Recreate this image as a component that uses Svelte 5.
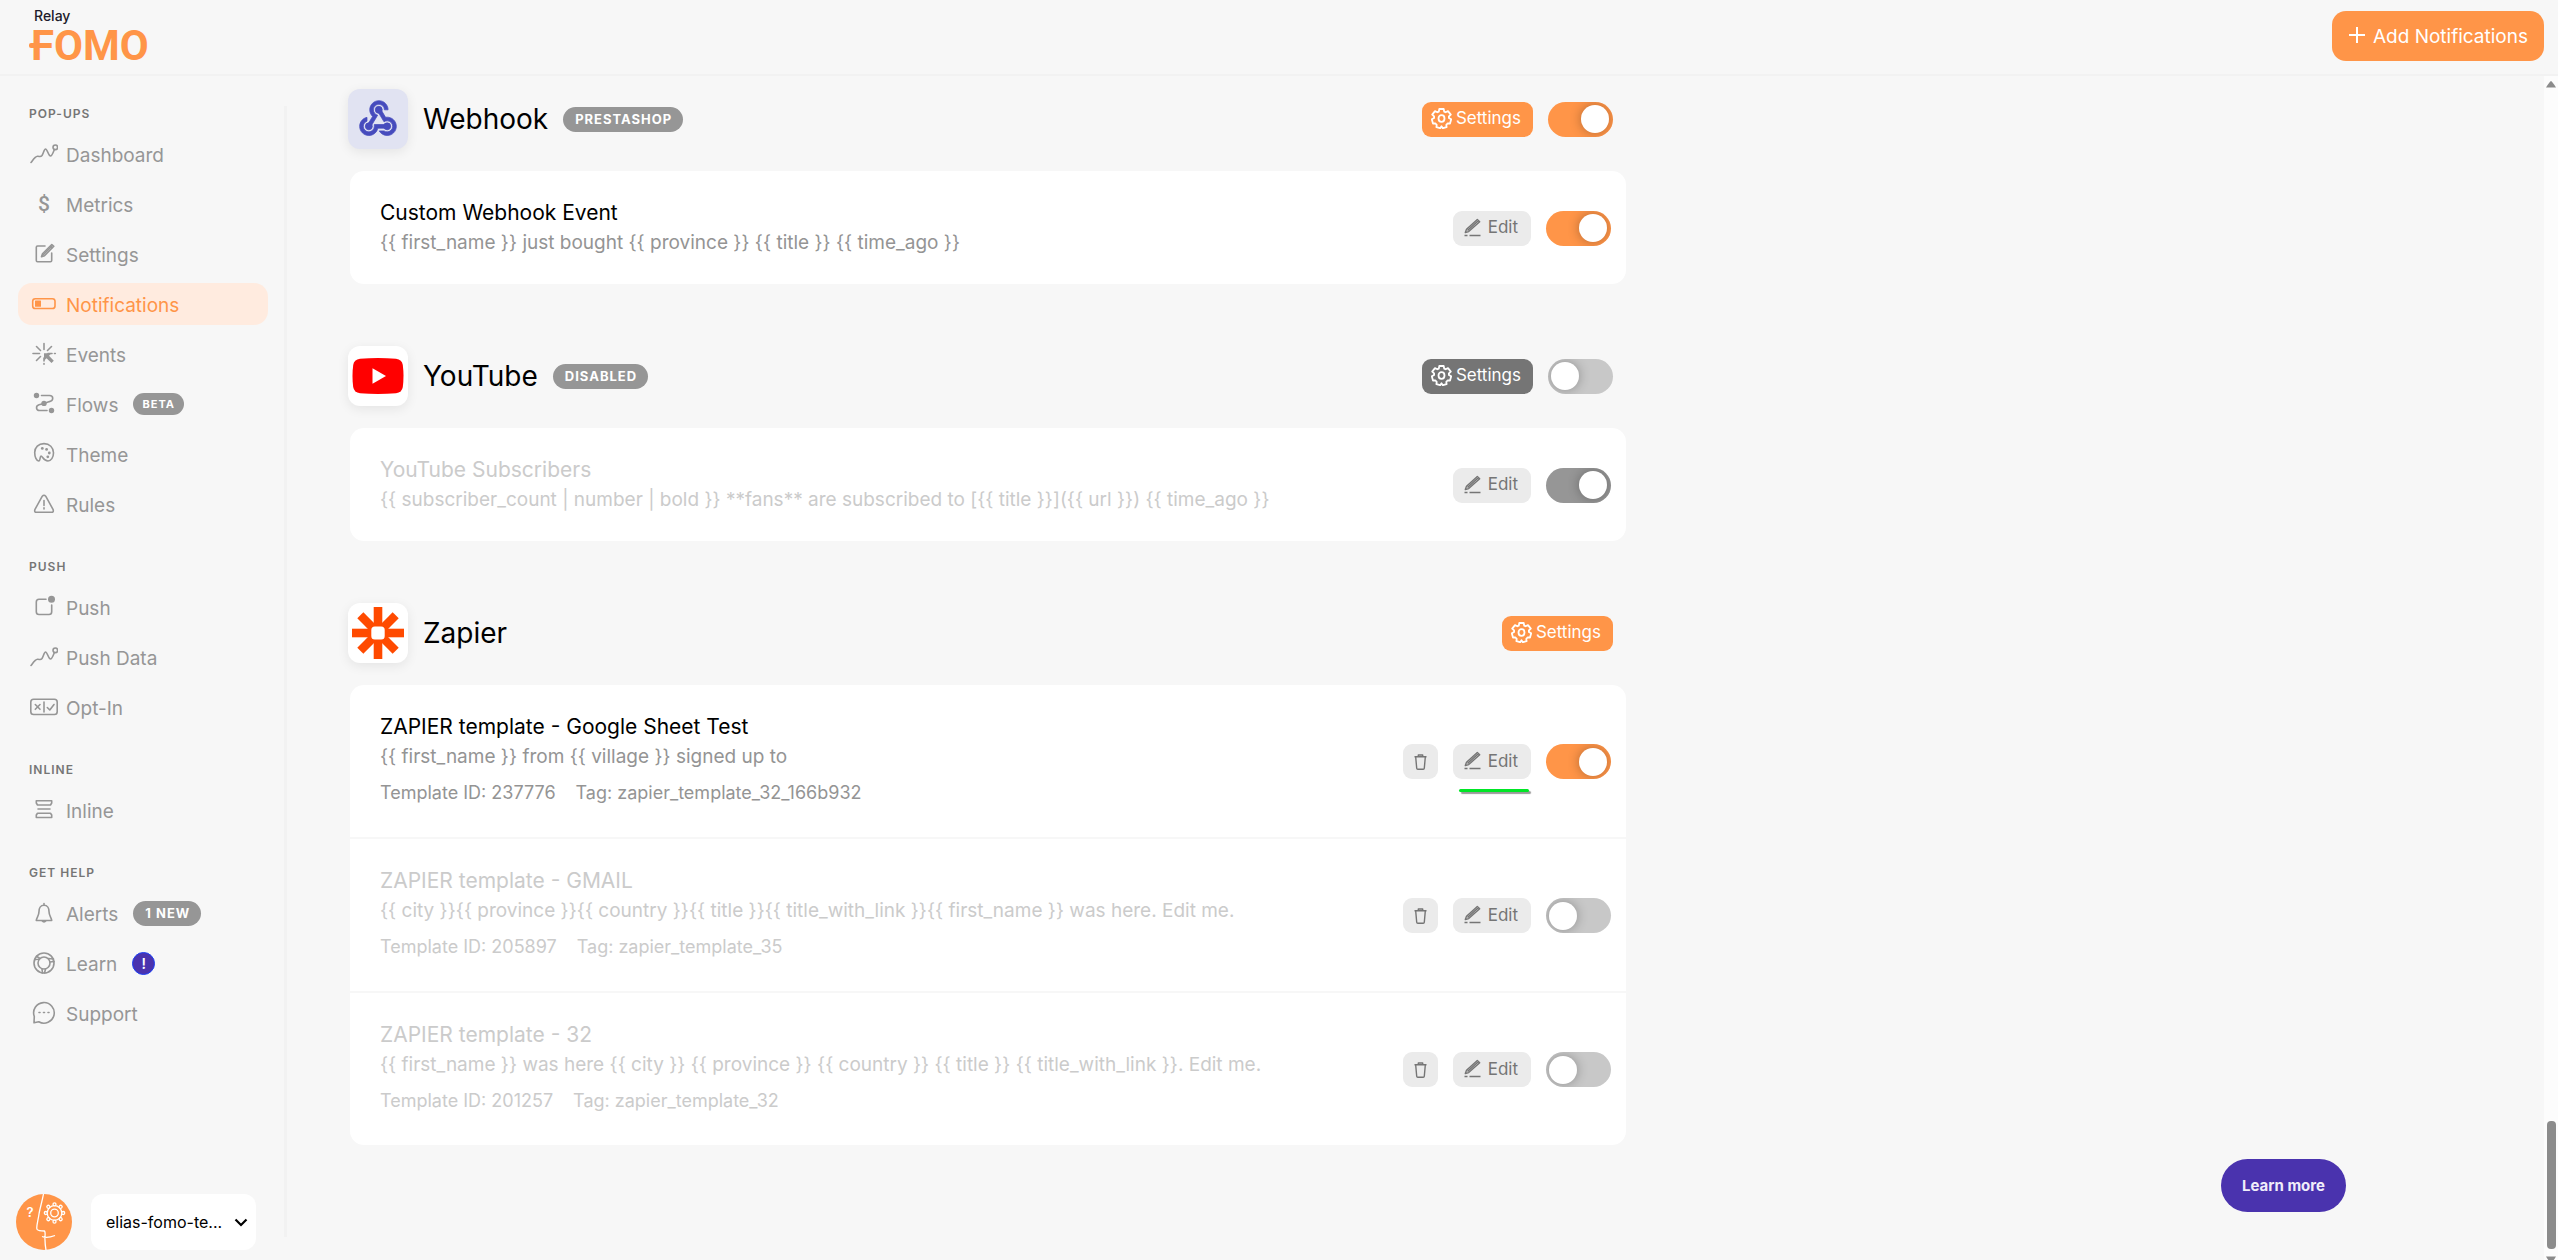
<script>
  const groups = [
    {
      title: 'POP-UPS',
      items: [
        { label: 'Dashboard', icon: 'chart' },
        { label: 'Metrics', icon: 'dollar' },
        { label: 'Settings', icon: 'compose' },
        { label: 'Notifications', icon: 'switch', active: true },
        { label: 'Events', icon: 'click' },
        { label: 'Flows', icon: 'flow', badge: 'BETA', kind: 'small' },
        { label: 'Theme', icon: 'palette' },
        { label: 'Rules', icon: 'warning' }
      ]
    },
    {
      title: 'PUSH',
      items: [
        { label: 'Push', icon: 'push' },
        { label: 'Push Data', icon: 'chart' },
        { label: 'Opt-In', icon: 'optin' }
      ]
    },
    { title: 'INLINE', items: [{ label: 'Inline', icon: 'inline' }] },
    {
      title: 'GET HELP',
      items: [
        { label: 'Alerts', icon: 'bell', badge: '1 NEW', kind: 'regular' },
        { label: 'Learn', icon: 'buoy', badge: '!', kind: 'dot' },
        { label: 'Support', icon: 'chat' }
      ]
    }
  ];

  let sections = $state([
    {
      name: 'Webhook', logo: 'webhook', tag: 'PRESTASHOP', toggle: true, on: true,
      rows: [
        { title: 'Custom Webhook Event', text: '{{ first_name }} just bought {{ province }} {{ title }} {{ time_ago }}', on: true }
      ]
    },
    {
      name: 'YouTube', logo: 'youtube', tag: 'DISABLED', toggle: true, on: false,
      rows: [
        { title: 'YouTube Subscribers', text: '{{ subscriber_count | number | bold }} **fans** are subscribed to [{{ title }}]({{ url }}) {{ time_ago }}', on: true, dim: true }
      ]
    },
    {
      name: 'Zapier', logo: 'zapier', toggle: false, on: true,
      rows: [
        { title: 'ZAPIER template - Google Sheet Test', text: '{{ first_name }} from {{ village }} signed up to', id: '237776', key: 'zapier_template_32_166b932', on: true, marked: true },
        { title: 'ZAPIER template - GMAIL', text: '{{ city }}{{ province }}{{ country }}{{ title }}{{ title_with_link }}{{ first_name }} was here. Edit me.', id: '205897', key: 'zapier_template_35', on: false, dim: true },
        { title: 'ZAPIER template - 32', text: '{{ first_name }} was here {{ city }} {{ province }} {{ country }} {{ title }} {{ title_with_link }}. Edit me.', id: '201257', key: 'zapier_template_32', on: false, dim: true }
      ]
    }
  ]);

  const teeth = [0, 45, 90, 135, 180, 225, 270, 315];
</script>

{#snippet navIcon(name)}
  <svg class="nav-icon" viewBox="0 0 28 28" aria-hidden="true">
    {#if name === 'chart'}
      <path d="M1 22.500C3 20 5 16.500 7.500 16.300C9.500 16.100 10.500 17.500 12 15.500C13.500 13 14.200 9 15.500 9C17.500 9 18.200 16 20.500 16C22 16 23 13 24.300 9.600" />
      <circle cx="25.300" cy="7.300" r="2.300" />
    {:else if name === 'dollar'}
      <text x="14" y="21" text-anchor="middle">$</text>
    {:else if name === 'compose'}
      <path d="M15 6H7.500Q6.300 6 6.300 7.200V20.500Q6.300 21.700 7.500 21.700H20.500Q21.700 21.700 21.700 20.500V13" />
      <path d="M11.500 16.800L12.500 13.800L21.800 4.500L23.800 6.300L14.500 15.700Z M20 6.500L22 8.200" />
      <path d="M12.500 15.500L22 6" />
    {:else if name === 'switch'}
      <rect x="2.700" y="8.700" width="22.300" height="9.800" rx="2.600" />
      <rect class="fill" x="5" y="10.500" width="6" height="6.200" rx="0.500" />
    {:else if name === 'click'}
      <path d="M14 3.500V9.500M6.500 6.500L10.500 10.500M21.500 6.500L17.500 10.500M3 13.500H9.500M6.500 20.500L10.500 16.500M18 13.500H22M24.500 13.500H25.300M14 18V21M14 23.500V24.300" />
      <path class="fill" d="M14 13.300H21.500L19 15.800L23.800 20.800L21.500 23L16.500 18.300L14 20.800Z" />
    {:else if name === 'flow'}
      <path d="M11.500 5.500H19.500C23.800 5.500 23.800 11 19.500 11.600L16 12.800M12 14L9 14.800C5.300 16 6 20.500 9.500 20.500H17" />
      <circle class="fill" cx="6.500" cy="5.500" r="2.700" />
      <circle class="fill" cx="14" cy="13.400" r="2.700" />
      <circle class="fill" cx="21.500" cy="20.500" r="2.700" />
    {:else if name === 'palette'}
      <path d="M14 3.600C8.500 3.600 4.700 7.500 4.700 12.500C4.700 17 6.500 21 8.700 21C10.500 21 9.800 16 11 16C12.500 16 13.500 21 18 21C21 21 23.500 17.500 23.500 12.800C23.500 7.500 19.500 3.600 14 3.600Z" />
      <circle class="fill" cx="12.300" cy="8.400" r="1.400" />
      <circle class="fill" cx="16.600" cy="9.400" r="1.400" />
      <circle class="fill" cx="19.300" cy="13" r="1.400" />
      <circle class="fill" cx="17.800" cy="16.800" r="1.400" />
    {:else if name === 'warning'}
      <path d="M12.300 6.200L5 19.300Q3.900 22.300 6.500 22.300H21.500Q24.100 22.300 23 19.300L15.700 6.200Q14 4.200 12.300 6.200Z" />
      <path d="M14 10.500V15.500M14 17.800V19" />
    {:else if name === 'push'}
      <path d="M16 6.300H9Q6.300 6.300 6.300 9V18.800Q6.300 21.500 9 21.500H19Q21.700 21.500 21.700 18.800V12" />
      <circle class="fill" cx="21.500" cy="6.300" r="3.500" />
    {:else if name === 'optin'}
      <rect x="0.800" y="6.300" width="26.400" height="15.200" rx="2.800" />
      <path d="M5.300 11.500L10 16.300M10 11.500L5.300 16.300M14 9V19M17.300 14.500L19.800 17L24 11.500" />
    {:else if name === 'inline'}
      <path d="M6.300 4.700H21.700V7L20.500 9H7.500L6.300 7ZM6.300 21.500H21.700V19L20.500 17.200H7.500L6.300 19ZM8 13H20" />
    {:else if name === 'bell'}
      <path d="M14 6.300C10.500 6.300 9 9.500 9 12.500C9 17 6.500 18.500 6.300 21.500H21.700C21.500 18.500 19 17 19 12.500C19 9.500 17.500 6.300 14 6.300ZM14 4.500V6" />
      <path class="fill" d="M11.300 22H16.700Q14 25.300 11.300 22Z" />
    {:else if name === 'buoy'}
      <circle cx="14" cy="14" r="10" />
      <circle cx="14" cy="14" r="6" />
      <path d="M4.800 10.500L9 10.300M6.500 7.300L10 9.500M18 9.500L23.500 10M20 13L24 12.500M12 20L12.500 24M15.500 20L14.500 24" />
    {:else}
      <path d="M4 23.800L4.300 17.500A10.300 10.300 0 1 1 8.800 22.800Z" />
      <path d="M9 13.500H10M13.500 13.500H14.500M18 13.500H19" />
    {/if}
  </svg>
{/snippet}

{#snippet gear()}
  <svg class="gear" viewBox="0 0 21 21" aria-hidden="true">
    <path d="M8.300 1H12.700L13.200 3.600L14.600 4.300L17 3.100L19.800 6.600L17.900 8.400V9.900L20.200 11.300L19 15.500H16.500L15.300 16.800L15.600 19.200L11.800 20.200L10.500 18.300L9.200 20.200L5.400 19.200L5.700 16.800L4.500 15.500H2L0.800 11.300L3.100 9.900V8.400L1.200 6.600L4 3.100L6.400 4.300L7.800 3.600Z" />
    <ellipse cx="10.500" cy="10.500" rx="3" ry="3.300" />
  </svg>
{/snippet}

<div class="page">
  <header class="topbar">
    <a class="brand" href="#home">
      <span class="brand-top">Relay</span>
      <span class="brand-mark">FOMO</span>
    </a>
    <button class="add" type="button">
      <svg viewBox="0 0 18 18" aria-hidden="true"><path d="M9 1V17M1 9H17" /></svg>
      <span>Add Notifications</span>
    </button>
  </header>

  <div class="body">
    <aside class="sidebar">
      <nav aria-label="Main">
        {#each groups as group}
          <section class="group">
            <h2>{group.title}</h2>
            <ul>
              {#each group.items as item}
                <li>
                  <a href="#{item.label}" class:active={item.active}>
                    {@render navIcon(item.icon)}
                    <span class="label">{item.label}</span>
                    {#if item.badge}<span class="badge {item.kind}">{item.badge}</span>{/if}
                  </a>
                </li>
              {/each}
            </ul>
          </section>
        {/each}
      </nav>
      <div class="account">
        <svg class="avatar" viewBox="0 0 56 56" aria-hidden="true">
          <circle class="disc" cx="28" cy="28" r="28" />
          <path d="M27.500 0C26 8 24 14 23 20C22 27 20.500 31 20.800 34.500C21 37.500 25 36.500 28.500 37C30 39 28.500 42 29 46C29 50 29.500 53 30 56M26 42.500C31 44.500 35 43 39 41.500" />
          <circle cx="38.500" cy="19" r="7.300" />
          <circle cx="38.500" cy="19" r="3.800" />
          {#each teeth as angle}
            <circle class="tooth" cx="38.500" cy="10.300" r="1.500" transform="rotate({angle} 38.5 19)" />
          {/each}
          <text x="14" y="23" text-anchor="middle">?</text>
        </svg>
        <div class="picker">
          <select aria-label="Account"><option>elias-fomo-te...</option></select>
          <svg viewBox="0 0 14 9" aria-hidden="true"><path d="M1.500 1.500L7 7L12.500 1.500" /></svg>
        </div>
      </div>
    </aside>
    <div class="rule"></div>

    <main>
      {#each sections as section}
        <section class="source">
          <header>
            <span class="tile {section.logo}">
              {#if section.logo === 'webhook'}
                <svg viewBox="0 0 24 24" aria-hidden="true">
                  <path d="M10 15h5.880c.27-.31.67-.5 1.120-.5.83 0 1.500.67 1.500 1.500s-.67 1.500-1.500 1.500c-.44 0-.84-.19-1.120-.5H11.900c-.46 2.280-2.480 4-4.900 4-2.760 0-5-2.240-5-5 0-2.420 1.720-4.440 4-4.900v2.070C4.840 13.580 4 14.700 4 16c0 1.650 1.350 3 3 3s3-1.350 3-3v-1zm2.500-11c1.650 0 3 1.350 3 3h2c0-2.760-2.240-5-5-5s-5 2.240-5 5c0 1.430.6 2.710 1.550 3.620l-2.350 3.900c-.68.14-1.200.75-1.200 1.480 0 .83.67 1.500 1.500 1.500s1.500-.67 1.500-1.500c0-.16-.02-.31-.07-.45l3.380-5.630C10.490 9.610 9.500 8.420 9.500 7c0-1.650 1.350-3 3-3zm4.500 9c-.64 0-1.230.2-1.720.54l-3.050-5.070C11.530 8.350 11 7.740 11 7c0-.83.67-1.500 1.500-1.500S14 6.170 14 7c0 .15-.02.29-.06.43l2.190 3.650c.28-.05.57-.08.87-.08 2.760 0 5 2.240 5 5s-2.240 5-5 5c-1.850 0-3.470-1.010-4.330-2.500h2.670c.48.32 1.050.5 1.660.5 1.650 0 3-1.350 3-3s-1.350-3-3-3z" />
                  <circle cx="12.400" cy="7" r="1.900" /><circle cx="7" cy="16" r="1.900" /><circle cx="17" cy="16" r="1.900" />
                </svg>
              {:else if section.logo === 'youtube'}
                <svg viewBox="0 0 52 36" aria-hidden="true">
                  <path class="red" d="M8 .8Q26-.8 44 .8Q50 1.500 50.800 7Q52.200 18 50.800 29Q50 34.500 44 35.200Q26 36.800 8 35.200Q2 34.500 1.200 29Q-.2 18 1.200 7Q2 1.500 8 .8Z" />
                  <path class="play" d="M20.500 10.300L34 18L20.500 25.700Z" />
                </svg>
              {:else}
                <svg viewBox="0 0 52 52" aria-hidden="true">
                  {#each teeth as angle, i}
                    <rect class="spoke" x="21.700" y={i % 2 ? 1 : 0} width="8.600" height="20" transform="rotate({angle} 26 26)" />
                  {/each}
                  <rect class="hub" x="19.300" y="19.500" width="13.400" height="13" rx="3.500" />
                </svg>
              {/if}
            </span>
            <h1>{section.name}</h1>
            {#if section.tag}<span class="badge regular">{section.tag}</span>{/if}
            <div class="actions">
              <button type="button" class="settings" class:off={!section.on}>{@render gear()}<span>Settings</span></button>
              {#if section.toggle}
                <input type="checkbox" role="switch" aria-label="Enable {section.name}" bind:checked={section.on} />
              {/if}
            </div>
          </header>

          <div class="card">
            {#each section.rows as row}
              <article class:dim={row.dim}>
                <div class="copy">
                  <h3>{row.title}</h3>
                  <p>{row.text}</p>
                  {#if row.id}
                    <p class="meta"><span>Template ID: {row.id}</span><span>Tag: {row.key}</span></p>
                  {/if}
                </div>
                <div class="controls">
                  {#if row.id}
                    <button type="button" class="ghost trash" aria-label="Delete {row.title}">
                      <svg viewBox="0 0 13 16" aria-hidden="true"><path d="M0.500 2.700H12.500M4.300 2.500V1H8.700V2.500M1.700 3L2.700 14.300Q2.800 15.300 3.800 15.300H9.200Q10.200 15.300 10.300 14.300L11.300 3" /></svg>
                    </button>
                  {/if}
                  <button type="button" class="ghost edit" class:marked={row.marked}>
                    <svg viewBox="0 0 17 19" aria-hidden="true"><path d="M1.300 14.500L2.500 11.200L13.300 1.500L15.700 3.700L4.700 13.600ZM3.500 12.500L14.300 2.700M0.500 17.500H3.500M5.500 17.500H16.500" /></svg>
                    <span>Edit</span>
                  </button>
                  <input type="checkbox" role="switch" class:muted={!section.on} aria-label="Enable {row.title}" bind:checked={row.on} />
                </div>
              </article>
            {/each}
          </div>
        </section>
      {/each}
    </main>

    <div class="scroller" aria-hidden="true">
      <svg viewBox="0 0 10 7"><path d="M5 0Q6 0 10 6.500H0Q4 0 5 0Z" /></svg>
      <span class="thumb"></span>
      <svg viewBox="0 0 10 7"><path d="M0 .5H10Q6 7 5 7Q4 7 0 .5Z" /></svg>
    </div>
  </div>

  <button class="learn" type="button">Learn more</button>
</div>

<style>
  :global(body) { margin: 0; background: #f7f7f7; }
  * { box-sizing: border-box; }
  .page {
    height: 100vh;
    display: flex;
    flex-direction: column;
    overflow: hidden;
    background: #f7f7f7;
    color: #000;
    font-family: Inter, "Noto Sans", sans-serif;
  }
  button, select { font-family: inherit; border: 0; margin: 0; cursor: pointer; }
  h1, h2, h3, p, ul { margin: 0; padding: 0; font-weight: 400; }
  ul { list-style: none; }
  svg { display: block; flex: none; }

  .topbar {
    flex: none;
    display: flex;
    justify-content: space-between;
    align-items: flex-start;
    padding: 8px 14px 0 31px;
    height: 76px;
    border-bottom: 2px solid #f2f2f2;
  }
  .brand { display: flex; flex-direction: column; text-decoration: none; }
  .brand-top { padding-left: 3px; color: #1d1b2b; font-size: 14px; font-weight: 500; line-height: 16px; }
  .brand-mark {
    position: relative;
    margin-top: 2px;
    color: #ff9548;
    font-family: Roboto, sans-serif;
    font-size: 42px;
    font-weight: 700;
    line-height: 40px;
  }
  .brand-mark::before {
    content: '';
    position: absolute;
    left: -2px;
    top: 17px;
    width: 10px;
    height: 5px;
    border-radius: 2px 0 0 2px;
    background: #ff9548;
  }
  .add {
    display: flex;
    align-items: center;
    gap: 7px;
    height: 50px;
    margin-top: 3px;
    padding: 2px 16px 0;
    border-radius: 14px;
    background: #ff9548;
    color: #fff;
    font-size: 19px;
    line-height: 24px;
  }
  .add svg { width: 18px; height: 18px; margin-bottom: 5px; fill: none; stroke: #fff; stroke-width: 2; }

  .body { flex: 1; display: flex; min-height: 0; }
  .sidebar { flex: none; width: 284px; display: flex; flex-direction: column; padding: 30px 16px 10px; }
  .group { margin-bottom: 34px; }
  .group h2 {
    padding-left: 13px;
    margin-bottom: 11px;
    color: #757575;
    font-size: 12px;
    font-weight: 600;
    line-height: 16px;
    letter-spacing: 1px;
  }
  .group ul { display: flex; flex-direction: column; gap: 8px; padding-left: 2px; }
  .group a {
    display: flex;
    align-items: center;
    height: 42px;
    padding-left: 12px;
    border-radius: 14px;
    color: #969696;
    font-size: 19px;
    text-decoration: none;
  }
  .group a.active { background: #ffebdf; color: #ff9548; }
  .label { padding: 4px 0 0 8px; line-height: 24px; }
  .nav-icon { width: 28px; height: 28px; fill: none; stroke: currentColor; stroke-width: 1.600; stroke-linecap: round; stroke-linejoin: round; }
  .nav-icon .fill { fill: currentColor; stroke: none; }
  .nav-icon text { fill: currentColor; stroke: none; font-family: Roboto, sans-serif; font-size: 21px; font-weight: 500; }

  .badge {
    display: flex;
    align-items: center;
    justify-content: center;
    border-radius: 13px;
    background: #969696;
    color: #fff;
    font-weight: 700;
    letter-spacing: 1px;
  }
  .badge.small { height: 22px; margin-left: 15px; padding: 0 9px; font-size: 11px; }
  .badge.regular { height: 25px; padding: 0 11px 0 12px; font-size: 13px; }
  .badge.dot { width: 23px; height: 23px; margin-left: 15px; border: 1px solid #1b3ff5; background: #4a33ae; font-size: 14px; font-weight: 600; letter-spacing: 0; }
  .label + .badge.regular { margin-left: 15px; }

  .account { display: flex; gap: 19px; margin-top: auto; }
  .avatar { width: 56px; height: 56px; fill: none; stroke: #fff; stroke-width: 1.300; }
  .avatar .disc { fill: #ff9548; stroke: none; }
  .avatar .tooth { fill: #ff9548; }
  .avatar text { fill: #fff; stroke: none; font-size: 13px; font-weight: 600; }
  .picker { position: relative; width: 165px; }
  .picker select {
    appearance: none;
    width: 100%;
    height: 56px;
    padding: 0 32px 0 15px;
    border-radius: 12px;
    background: #fff;
    color: #000;
    font-size: 16px;
  }
  .picker svg { position: absolute; right: 8px; top: 24px; width: 14px; height: 9px; fill: none; stroke: #000; stroke-width: 2.200; pointer-events: none; }
  .rule { flex: none; width: 3px; margin: 30px 0 23px; background: #f2f2f2; }

  main { flex: 1; min-width: 0; padding: 13px 24px 0 61px; overflow: hidden; }
  .source { max-width: 1278px; margin-bottom: 62px; }
  .source header { display: flex; align-items: center; gap: 15px; padding-right: 13px; margin-bottom: 22px; }
  .source h1 { font-size: 28px; line-height: 36px; }
  .tile {
    display: grid;
    place-items: center;
    width: 60px;
    height: 60px;
    border-radius: 12px;
    background: #fff;
    box-shadow: 0 3px 12px rgba(0, 0, 0, 0.08);
  }
  .tile.webhook { background: #e1e3f2; }
  .tile.webhook svg { width: 44px; height: 44px; fill: #464bbd; stroke: #464bbd; stroke-width: 0.400; }
  .tile.youtube svg { width: 52px; height: 36px; }
  .tile.zapier svg { width: 52px; height: 52px; }
  .red { fill: #f00; }
  .play, .hub { fill: #fff; }
  .spoke { fill: #ff4a00; }

  .actions, .controls { display: flex; align-items: center; gap: 15px; margin-left: auto; }
  .settings {
    display: flex;
    align-items: center;
    gap: 4px;
    height: 35px;
    padding: 0 12px 2px 9px;
    border-radius: 9px;
    background: #ff9548;
    color: #fff;
    font-size: 17px;
  }
  .settings.off { background: #757575; }
  .gear { width: 21px; height: 21px; fill: none; stroke: #fff; stroke-width: 1.800; stroke-linejoin: round; }

  input[type='checkbox'] {
    appearance: none;
    flex: none;
    width: 65px;
    height: 35px;
    margin: 0;
    padding: 3px 4px 3px 3px;
    border-radius: 18px;
    background: #c8c8c8;
    display: flex;
    align-items: center;
    overflow: hidden;
    cursor: pointer;
  }
  input[type='checkbox']::before {
    content: '';
    width: 28px;
    height: 28px;
    border-radius: 50%;
    background: #fff;
    box-shadow: 0 0 12px rgba(0, 0, 0, 0.3);
  }
  input[type='checkbox']:checked { justify-content: flex-end; background: #ff9548; }
  input[type='checkbox'].muted:checked { background: #969696; }

  .card { display: flex; flex-direction: column; gap: 2px; margin-left: 2px; border-radius: 14px; overflow: hidden; }
  article { display: flex; align-items: center; padding: 27px 15px 26px 30px; background: #fff; }
  h3 { font-size: 21px; line-height: 30px; }
  .copy p { color: #949494; font-size: 19px; line-height: 30px; }
  .copy .meta { display: flex; gap: 20px; margin-top: 6px; padding-bottom: 3px; font-size: 18px; }
  .dim h3, .dim .copy p { color: #cbcbcb; }
  .ghost { display: flex; align-items: center; height: 35px; border-radius: 9px; background: #ebebeb; color: #757575; font-size: 17px; }
  .ghost svg { fill: none; stroke: #757575; stroke-width: 1.400; stroke-linejoin: round; }
  .trash { justify-content: center; width: 35px; padding: 0; }
  .trash svg { width: 13px; height: 16px; }
  .edit { position: relative; gap: 7px; padding: 0 13px 2px 11px; }
  .edit svg { width: 17px; height: 19px; }
  .marked::after {
    content: '';
    position: absolute;
    left: 6px;
    top: 45px;
    width: 70px;
    height: 3px;
    border-radius: 2px;
    background: #00e626;
    box-shadow: 2px 2px 1px rgba(0, 0, 0, 0.4);
  }

  .scroller { flex: none; display: flex; flex-direction: column; align-items: center; width: 14px; padding-top: 5px; background: #fcfcfc; overflow: hidden; }
  .scroller svg { width: 10px; height: 7px; fill: #8b8b8b; }
  .scroller svg:last-child { margin-bottom: -3px; }
  .thumb { width: 9px; height: 128px; margin: auto 0 7px; border-radius: 4px; background: #8b8b8b; }

  .learn {
    position: fixed;
    right: 212px;
    bottom: 48px;
    height: 53px;
    padding: 0 21px;
    border-radius: 27px;
    background: #4a33ae;
    color: #f0edfa;
    font-size: 15px;
    font-weight: 700;
  }
</style>
